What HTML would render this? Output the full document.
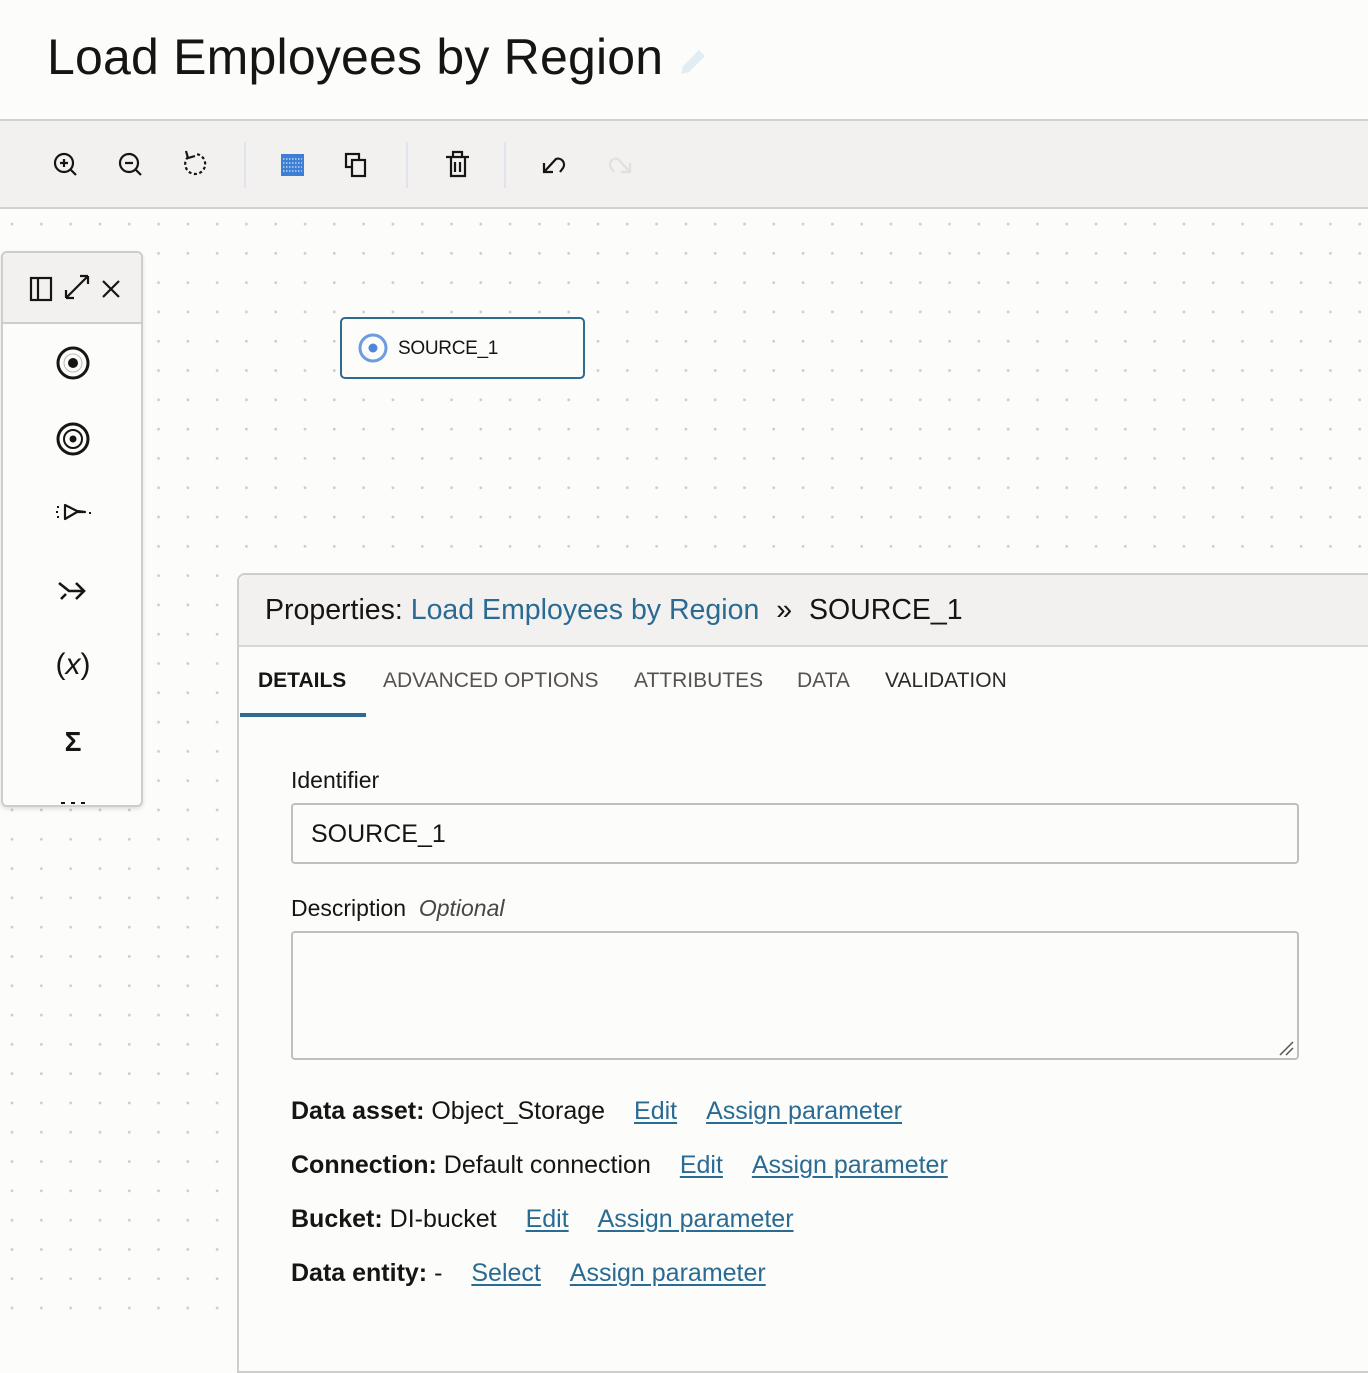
<!DOCTYPE html>
<html><head><meta charset="utf-8">
<style>
*{box-sizing:border-box;margin:0;padding:0}
html,body{width:1368px;height:1316px;overflow:hidden;background:#fcfcfb;font-family:"Liberation Sans",Arial,sans-serif;color:#161513}
.abs{position:absolute}
#title{left:47px;top:28px;font-size:50px;line-height:58px;color:#161513;letter-spacing:0.2px}
#hdr{left:0;top:0;width:1368px;height:121px;background:#fcfcfb;border-bottom:2px solid #d3d1ce}
#tb{left:0;top:121px;width:1368px;height:88px;background:#f2f1ef;border-bottom:2px solid #d3d1ce}
#canvas{left:0;top:210px;width:1368px;height:1106px;background-color:#fcfcfb;background-image:radial-gradient(circle,#cfcdca 1.3px,transparent 1.6px);background-size:29.3px 29.3px;background-position:-2.6px -0.6px}
.sep{width:2px;height:46px;background:#dfe5ea;top:142px}
#pal{left:1px;top:251px;width:142px;height:556px;background:#fcfcfb;border:2px solid #cfcdca;border-radius:6px;box-shadow:0 2px 4px rgba(0,0,0,.12);overflow:hidden}
#palh{left:0;top:0;width:140px;height:71px;background:#f2f1ef;border-bottom:2px solid #cfcdca}
#node{left:340px;top:317px;width:245px;height:62px;border:2px solid #2d6b8f;border-radius:5px;background:#fcfcfb}
#props{left:237px;top:573px;width:1140px;height:800px;background:#fcfcfb;border:2px solid #cfcdca;border-radius:8px 0 0 0}
#ph{left:0;top:0;width:1140px;height:72px;background:#f2f1ef;border-bottom:2px solid #d8d6d3;border-radius:8px 0 0 0}
.tab{top:94px;font-size:21px;color:#56524d}
.lbl{font-size:23px;color:#161513}
.inp{border:2px solid #c2bfbb;border-radius:4px;background:#fcfcfb}
.row{left:52px;font-size:25px;color:#161513;white-space:nowrap}
.row b{font-weight:bold}
.row a{color:#2a6b93;text-decoration:underline;text-underline-offset:3px;margin-left:22px}
</style></head><body>
<div id="hdr" class="abs"></div>
<div id="title" class="abs">Load Employees by Region</div>
<svg class="abs" style="left:676px;top:44px" width="34" height="34" viewBox="0 0 34 34"><path d="M5 30 L7 22 L23 6 L29 12 L13 28 Z" fill="#e2edf3"/></svg>
<div id="tb" class="abs"></div>
<svg class="abs" style="left:0;top:121px" width="700" height="88" viewBox="0 0 700 88">
 <g fill="none" stroke="#161513" stroke-width="2.2">
  <circle cx="64" cy="42" r="9"/><path d="M70 48 L76 54 M60 42 H68 M64 38 V46"/>
  <circle cx="129" cy="42" r="9"/><path d="M135 48 L141 54 M125 42 H133"/>
  <path d="M188 36 A10 10 0 1 0 196 33" stroke-dasharray="3 2.5"/><path d="M186 30 L188 37 L195 35"/>
  <rect x="346" y="33" width="13" height="13"/><rect x="352" y="39" width="13" height="16" fill="#f2f1ef"/>
  <path d="M446 36 H469 M451 36 V55 H465 V36 M453 36 V31 H462 V36 M455 41 V51 M460 41 V51"/>
  <path d="M544 42 V51 H553 M544 51 L556 38 A6 6 0 0 1 563 47 L560 51"/>
 </g>
 <rect x="281" y="33" width="23" height="22" fill="#3c7fd4"/>
 <g stroke="#fff" stroke-width="1" stroke-dasharray="1.5 1.5"><path d="M283 38 H302 M283 42 H302 M283 46 H302 M283 50 H302"/></g>
 <path d="M630 42 V51 H621 M630 51 L618 38 A6 6 0 0 0 611 47 L614 51" fill="none" stroke="#e2e0dd" stroke-width="2.2"/>
</svg>
<div class="abs sep" style="left:244px"></div>
<div class="abs sep" style="left:406px"></div>
<div class="abs sep" style="left:504px"></div>
<div id="canvas" class="abs"></div>
<div id="pal" class="abs">
 <div id="palh" class="abs"></div>
 <svg class="abs" style="left:0;top:0" width="140" height="554" viewBox="0 0 140 554">
  <g fill="none" stroke="#161513" stroke-width="2.2">
   <rect x="28" y="25" width="20" height="22"/><path d="M35 25 V47"/>
   <path d="M63 45 L85 23 M63 45 V37 M63 45 H71 M85 23 H77 M85 23 V31"/>
   <path d="M100 28 L116 44 M116 28 L100 44"/>
   <circle cx="70" cy="110" r="15" stroke-width="3"/><circle cx="70" cy="110" r="9" stroke="#aaa" stroke-width="0.8"/>
   <circle cx="70" cy="186" r="15" stroke-width="3"/><circle cx="70" cy="186" r="9" stroke-width="2"/>
   <path d="M62 252 L62 266 L74 259 L82 259 L74 258 Z" stroke-linejoin="round"/>
   <path d="M55 253 v2 M54 258 v2 M55 263 v2 M86 260 h2" stroke-width="2"/>
   <path d="M56 330 L66 338 L81 338 M73 330 L81 338 L73 346 M58 346 L63 341" stroke-width="2.6"/>
  </g>
  <circle cx="70" cy="110" r="5" fill="#161513"/><circle cx="70" cy="186" r="3.5" fill="#161513"/>
  <text x="70" y="421" text-anchor="middle" font-size="30" font-family="Liberation Sans" fill="#161513">(<tspan font-style="italic">x</tspan>)</text>
  <text x="70" y="498" text-anchor="middle" font-size="28" font-weight="bold" font-family="Liberation Sans" fill="#161513">Σ</text>
  <path d="M58 550 h4 M68 550 h4 M78 550 h4" stroke="#161513" stroke-width="2"/>
 </svg>
</div>
<div id="node" class="abs">
 <svg class="abs" style="left:15px;top:13px" width="32" height="32"><circle cx="16" cy="16" r="13" fill="none" stroke="#6b9be0" stroke-width="3"/><circle cx="16" cy="16" r="4.5" fill="#4d86db"/></svg>
 <div class="abs" style="left:56px;top:19px;font-size:19px;color:#161513;letter-spacing:-0.3px">SOURCE_1</div>
</div>
<div id="props" class="abs">
 <div id="ph" class="abs"></div>
 <div class="abs" style="left:26px;top:19px;font-size:28.5px;white-space:nowrap">Properties: <span style="color:#2a6b93">Load Employees by Region</span> <span style="margin:0 9px">»</span> SOURCE_1</div>
 <div class="abs tab" style="left:19px;color:#161513;font-weight:bold">DETAILS</div>
 <div class="abs tab" style="left:144px">ADVANCED OPTIONS</div>
 <div class="abs tab" style="left:395px">ATTRIBUTES</div>
 <div class="abs tab" style="left:558px">DATA</div>
 <div class="abs tab" style="left:646px;color:#2d2a27">VALIDATION</div>
 <div class="abs" style="left:1px;top:138px;width:126px;height:4px;background:#2d6b8f"></div>
 <div class="abs lbl" style="left:52px;top:192px">Identifier</div>
 <div class="abs inp" style="left:52px;top:228px;width:1008px;height:61px"></div>
 <div class="abs" style="left:72px;top:245px;font-size:25px">SOURCE_1</div>
 <div class="abs lbl" style="left:52px;top:320px">Description&nbsp; <i style="color:#4a4743">Optional</i></div>
 <div class="abs inp" style="left:52px;top:356px;width:1008px;height:129px"></div>
 <svg class="abs" style="left:1040px;top:466px" width="16" height="16"><path d="M1 14 L14 1 M7 14 L14 7" stroke="#555" stroke-width="1.5"/></svg>
 <div class="abs row" style="top:522px"><b>Data asset:</b> Object_Storage <a>Edit</a> <a>Assign parameter</a></div>
 <div class="abs row" style="top:576px"><b>Connection:</b> Default connection <a>Edit</a> <a>Assign parameter</a></div>
 <div class="abs row" style="top:630px"><b>Bucket:</b> DI-bucket <a>Edit</a> <a>Assign parameter</a></div>
 <div class="abs row" style="top:684px"><b>Data entity:</b> - <a>Select</a> <a>Assign parameter</a></div>
</div>
</body></html>
